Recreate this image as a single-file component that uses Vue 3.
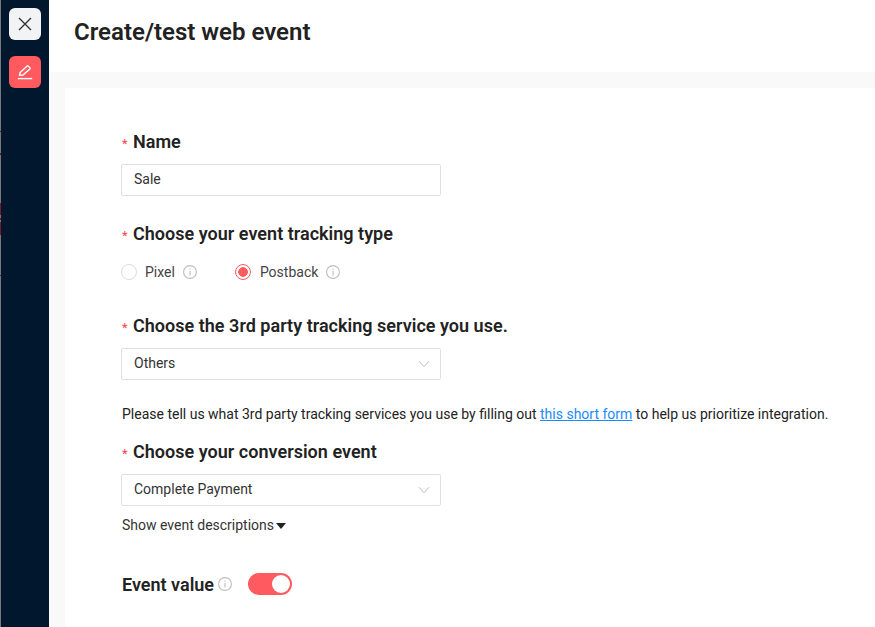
<script setup>
const stripMarks = [
  { top: 11, height: 1, color: "#6b1a2a" },
  { top: 33, height: 2, color: "#7a1a2a" },
  { top: 83, height: 12, color: "#7a1a2a" },
  { top: 98, height: 2, color: "#7a1a2a" },
  { top: 102, height: 13, color: "#7a1a2a" },
  { top: 155, height: 1, color: "#333333" },
];
</script>

<template>
  <div class="page">
    <aside class="sidebar">
      <div class="strip">
        <i
          v-for="mark in stripMarks"
          :key="mark.top"
          :style="{ top: 120 + mark.top + 'px', height: mark.height + 'px', background: mark.color }"
        />
      </div>
      <button type="button" class="side-btn close">
        <svg width="14" height="14" viewBox="0 0 14 14" fill="none" stroke="#333" stroke-width="1.4">
          <path d="M1 1l12 12M13 1L1 13" />
        </svg>
      </button>
      <button type="button" class="side-btn edit">
        <svg width="16" height="16" viewBox="0 0 16 16" fill="none" stroke="#fff" stroke-width="1.4">
          <path d="M2.6 11.2l.5-2.6 6.8-6.4a1 1 0 0 1 1.4 0l1.5 1.4a1 1 0 0 1 0 1.4L6 11z" />
          <path d="M.8 14.6h14.4" />
        </svg>
      </button>
    </aside>

    <main class="main">
      <header class="top">
        <h1>Create/test web event</h1>
      </header>

      <div class="content">
        <form class="card" @submit.prevent>
          <div class="field name-field">
            <label class="label"><span class="req">*</span>Name</label>
            <div class="control"><span>Sale</span></div>
          </div>

          <div class="field type-field">
            <label class="label"><span class="req">*</span>Choose your event tracking type</label>
            <div class="radios">
              <span class="radio-item pixel">
                <span class="radio" />
                <span>Pixel</span>
                <svg class="info" viewBox="0 0 14 14"><circle cx="7" cy="7" r="6.4" /><path d="M7 6v4.4M7 3.4v1.4" /></svg>
              </span>
              <span class="radio-item">
                <span class="radio on" />
                <span>Postback</span>
                <svg class="info" viewBox="0 0 14 14"><circle cx="7" cy="7" r="6.4" /><path d="M7 6v4.4M7 3.4v1.4" /></svg>
              </span>
            </div>
          </div>

          <div class="field service-field">
            <label class="label"><span class="req">*</span>Choose the 3rd party tracking service you use.</label>
            <div class="control select">
              <span>Others</span>
              <svg class="chevron" viewBox="0 0 12 8"><path d="M1 1.2l5 5.4 5-5.4" /></svg>
            </div>
          </div>

          <p class="hint">
            Please tell us what 3rd party tracking services you use by filling out
            <a href="#" @click.prevent>this short form</a> to help us prioritize integration.
          </p>

          <div class="field conversion-field">
            <label class="label"><span class="req">*</span>Choose your conversion event</label>
            <div class="control select">
              <span>Complete Payment</span>
              <svg class="chevron" viewBox="0 0 12 8"><path d="M1 1.2l5 5.4 5-5.4" /></svg>
            </div>
          </div>

          <div class="show-desc">Show event descriptions<span class="caret" /></div>

          <div class="event-value">
            <span class="value-label">Event value</span>
            <svg class="info" viewBox="0 0 14 14"><circle cx="7" cy="7" r="6.4" /><path d="M7 6v4.4M7 3.4v1.4" /></svg>
            <span class="switch"><span class="knob" /></span>
          </div>
        </form>
      </div>
    </main>
  </div>
</template>

<style scoped>
.page {
  display: flex;
  width: 875px;
  height: 627px;
  overflow: hidden;
  font-family: Roboto, "Liberation Sans", sans-serif;
  color: #222;
  background: #fff;
}

.sidebar {
  position: relative;
  flex: 0 0 49px;
  box-sizing: border-box;
  padding: 8px 0 0 9px;
  display: flex;
  flex-direction: column;
  gap: 16px;
  background: #00172e;
}

.strip {
  position: absolute;
  left: 0;
  top: 0;
  bottom: 0;
  width: 1px;
  background: #777;
}

.strip i {
  position: absolute;
  left: 0;
  width: 1px;
}

.side-btn {
  width: 32px;
  height: 32px;
  padding: 0;
  border: 0;
  border-radius: 6px;
  display: flex;
  align-items: center;
  justify-content: center;
}

.close {
  background: #f2f3f5;
}

.edit {
  background: #fe5a5f;
}

.main {
  flex: 1;
  min-width: 0;
  display: flex;
  flex-direction: column;
}

.top {
  height: 72px;
  flex: none;
  display: flex;
  align-items: center;
  padding-left: 25px;
  background: #fff;
}

.top h1 {
  margin: 0 0 8px;
  font-size: 24px;
  font-weight: 600;
  line-height: 32px;
  color: #222;
}

.content {
  flex: 1;
  min-height: 0;
  padding: 16px 0 0 16px;
  background: #f9f9f9;
}

.card {
  height: 100%;
  box-sizing: border-box;
  padding: 41px 0 0 56px;
  background: #fff;
}

.label {
  display: block;
  height: 26px;
  font-size: 18px;
  font-weight: 600;
  line-height: 26px;
  letter-spacing: 0.02px;
  color: #222;
}

.req {
  display: inline-block;
  width: 12px;
  padding-left: 1px;
  box-sizing: border-box;
  font-size: 13px;
  font-weight: 400;
  color: #f5444a;
}

.field .label {
  margin-bottom: 9px;
}

.control {
  box-sizing: border-box;
  width: 320px;
  height: 32px;
  padding: 0 10px 0 12px;
  display: flex;
  align-items: center;
  justify-content: space-between;
  border: 1px solid #e0e0e0;
  border-radius: 2px;
  font-size: 14px;
  color: #333;
}

.control span {
  margin-bottom: 2px;
}

.chevron {
  width: 12px;
  height: 8px;
  fill: none;
  stroke: #bbb;
  stroke-width: 1;
}

.type-field {
  margin-top: 25px;
}

.radios {
  margin-top: 15px;
  height: 20px;
  display: flex;
  align-items: center;
  font-size: 14px;
  color: #444;
}

.radio-item {
  display: flex;
  align-items: center;
}

.pixel {
  margin-right: 38px;
}

.radio {
  box-sizing: border-box;
  width: 16px;
  height: 16px;
  margin-right: 8px;
  border: 1px solid #ddd;
  border-radius: 50%;
  background: #fff;
}

.radio.on {
  margin-right: 9px;
  border-color: #fe5a5f;
  background: radial-gradient(circle, #fe5a5f 0 4.5px, #fff 5px);
}

.info {
  width: 14px;
  height: 14px;
  margin-left: 8px;
  fill: none;
  stroke: #bdbdbd;
  stroke-width: 1.1;
}

.service-field {
  margin-top: 31px;
}

.hint {
  margin: 25px 0 0;
  padding-left: 1px;
  font-size: 14px;
  line-height: 18px;
  color: #222;
  white-space: nowrap;
}

.hint a {
  color: #1a8cff;
}

.conversion-field {
  margin-top: 16px;
}

.show-desc {
  margin-top: 10px;
  padding-left: 1px;
  height: 18px;
  display: flex;
  align-items: center;
  font-size: 14px;
  line-height: 18px;
  color: #333;
}

.caret {
  margin: 1px 0 0 2px;
  border-style: solid;
  border-width: 6px 5px 0;
  border-color: #222 transparent transparent;
}

.event-value {
  margin-top: 37px;
  padding-left: 1px;
  height: 26px;
  display: flex;
  align-items: center;
}

.value-label {
  font-size: 18px;
  font-weight: 600;
  color: #222;
}

.event-value .info {
  margin-left: 4px;
}

.switch {
  margin-left: 16px;
  box-sizing: border-box;
  width: 44px;
  height: 22px;
  padding: 2px;
  display: flex;
  justify-content: flex-end;
  border-radius: 11px;
  background: #fe5a5f;
}

.knob {
  width: 18px;
  height: 18px;
  border-radius: 50%;
  background: #fff;
}
</style>
